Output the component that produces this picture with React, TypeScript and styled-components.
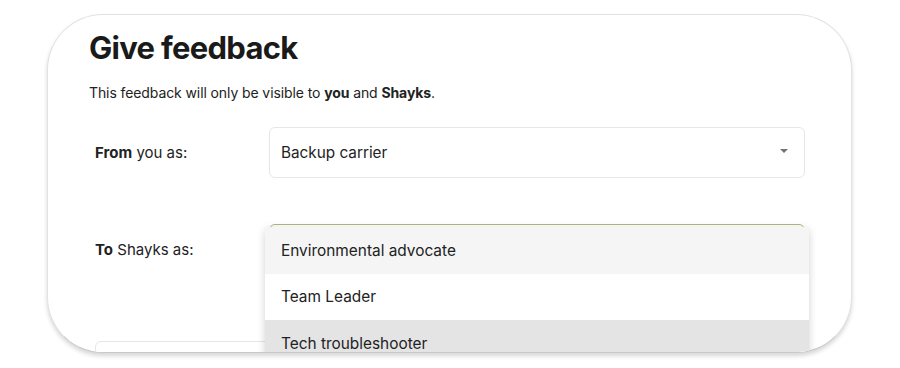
import React from "react";
import styled, { createGlobalStyle } from "styled-components";

const Global = createGlobalStyle`
  html, body { margin: 0; padding: 0; background: #ffffff; }
  body { font-family: Inter, "Noto Sans", Arial, sans-serif; color: #1f1f1f; }
  * { box-sizing: border-box; }
`;

const Page = styled.div`
  width: 900px;
  height: 368px;
  padding: 14px 48px 0 47px;
  background: #ffffff;
`;

const Card = styled.div`
  width: 805px;
  height: 339px;
  border: 1px solid #e2e2e2;
  border-bottom-color: #c9c9c9;
  border-radius: 56px;
  background: #ffffff;
  overflow: hidden;
  box-shadow: 0 3px 4px rgba(0, 0, 0, 0.16);
  padding: 14px 46px 0 41px;
`;

const Title = styled.h1`
  margin: 0;
  font-size: 31px;
  line-height: 38px;
  font-weight: 700;
  letter-spacing: -0.7px;
  color: #1a1a1a;
`;

const Note = styled.p`
  margin: 16px 0 0;
  font-size: 14px;
  line-height: 20px;
  letter-spacing: -0.1px;
  color: #222;
  b { font-weight: 700; }
`;

const Form = styled.div`
  margin-top: 24px;
  display: flex;
  flex-direction: column;
  gap: 46px;
`;

const Row = styled.div`
  display: grid;
  grid-template-columns: 174px 1fr;
  align-items: center;
  padding-left: 6px;
`;

const Label = styled.div`
  font-size: 15px;
  color: #222;
  b { font-weight: 700; }
`;

const SelectWrap = styled.div`
  position: relative;
`;

const SelectBox = styled.div<{ $focused?: boolean }>`
  height: 51px;
  border: 1px solid ${(p) => (p.$focused ? "#aeb97c" : "#e6e6e6")};
  border-width: ${(p) => (p.$focused ? "1.5px" : "1px")};
  border-radius: 6px;
  display: flex;
  align-items: center;
  justify-content: space-between;
  padding: 0 16px 0 11px;
  font-size: 15.3px;
  color: #222;
  background: #fff;
`;

const Caret = styled.span`
  width: 0;
  height: 0;
  border-left: 4.5px solid transparent;
  border-right: 4.5px solid transparent;
  border-top: 4.5px solid #747474;
  margin-top: -4px;
`;

const Menu = styled.ul`
  position: absolute;
  top: 3px;
  left: -4px;
  right: -4px;
  margin: 0;
  padding: 0;
  list-style: none;
  background: #fff;
  border-radius: 5px 5px 0 0;
  box-shadow: 0 2px 8px rgba(0, 0, 0, 0.18);
  z-index: 2;
`;

const Option = styled.li<{ $tone: "hover" | "plain" | "selected" }>`
  height: 46.5px;
  display: flex;
  align-items: center;
  padding-left: 16px;
  font-size: 15.4px;
  color: #222;
  background: ${(p) =>
    p.$tone === "hover" ? "#f5f5f5" : p.$tone === "selected" ? "#e4e4e4" : "#ffffff"};
`;

const TextArea = styled.div`
  margin: 66px 0 0 6px;
  height: 80px;
  border: 1px solid #e6e6e6;
  border-radius: 6px;
  background: #fff;
`;

export default function App() {
  return (
    <>
      <Global />
      <Page>
        <Card>
          <Title>Give feedback</Title>
          <Note>
            This feedback will only be visible to <b>you</b> and <b>Shayks</b>.
          </Note>
          <Form>
            <Row>
              <Label>
                <b>From</b> you as:
              </Label>
              <SelectWrap>
                <SelectBox>
                  <span>Backup carrier</span>
                  <Caret />
                </SelectBox>
              </SelectWrap>
            </Row>
            <Row>
              <Label>
                <b>To</b> Shayks as:
              </Label>
              <SelectWrap>
                <SelectBox $focused />
                <Menu>
                  <Option $tone="hover">Environmental advocate</Option>
                  <Option $tone="plain">Team Leader</Option>
                  <Option $tone="selected">Tech troubleshooter</Option>
                </Menu>
              </SelectWrap>
            </Row>
          </Form>
          <TextArea />
        </Card>
      </Page>
    </>
  );
}
